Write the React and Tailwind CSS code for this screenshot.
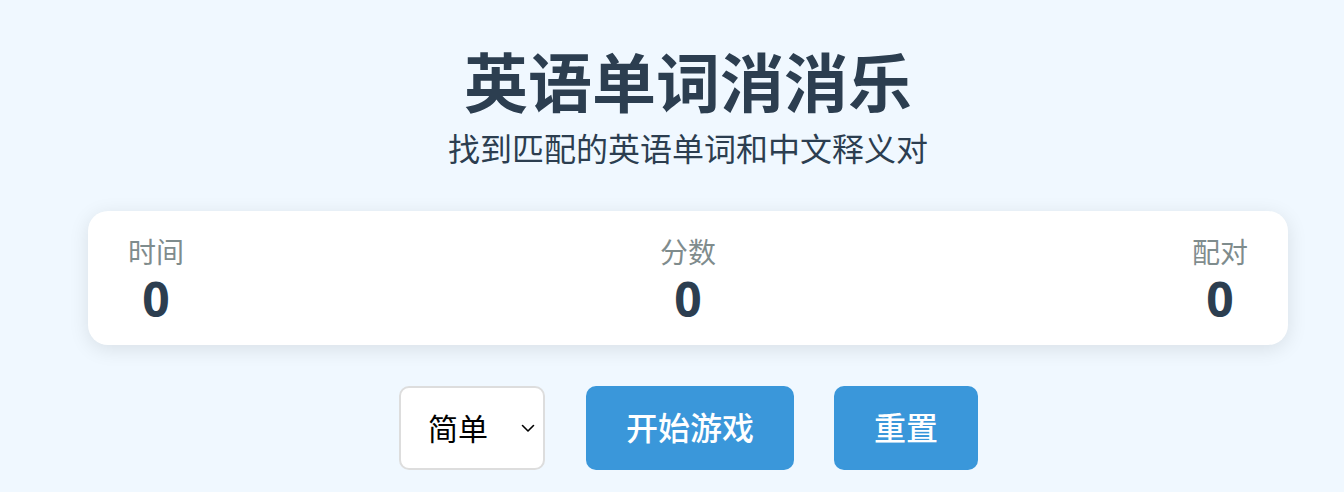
import React, { useState } from 'react';

const FONT = '"Noto Sans", "Noto Sans CJK SC", sans-serif';

function Stat({ label, value }) {
  return (
    <div className="flex flex-col items-center">
      <span className="text-[28px] leading-[42px] text-[#7f8c8d]">{label}</span>
      <span className="text-[48px] leading-[52px] font-bold text-[#2c3e50]">{value}</span>
    </div>
  );
}

export default function App() {
  const [level, setLevel] = useState('easy');

  return (
    <div className="min-h-screen bg-[#f0f8ff] pl-[32px]" style={{ fontFamily: FONT }}>
      <div className="max-w-[1200px] mx-auto pt-[44px]">
        {/* Header */}
        <div className="flex flex-col items-center">
          <h1 className="text-[64px] leading-[77px] font-bold text-[#2c3e50]">英语单词消消乐</h1>
          <p className="mt-[9px] text-[32px] leading-[38px] text-[#2c3e50]">找到匹配的英语单词和中文释义对</p>
        </div>

        {/* Stats */}
        <div className="mt-[43px] bg-white rounded-[20px] shadow-[0_4px_20px_rgba(0,0,0,0.1)] px-[40px] py-[20px] flex justify-between">
          <Stat label="时间" value="0" />
          <Stat label="分数" value="0" />
          <Stat label="配对" value="0" />
        </div>

        {/* Controls */}
        <div className="mt-[41px] flex justify-center items-center gap-[40px] pl-[1px]">
          <div className="relative mr-[1px]">
            <select
              value={level}
              onChange={(e) => setLevel(e.target.value)}
              className="appearance-none w-[146px] h-[84px] bg-white border-2 border-[#dddddd] rounded-[10px] pl-[27px] text-[30px] text-black outline-none"
              style={{ fontFamily: FONT }}
            >
              <option value="easy">简单</option>
              <option value="medium">中等</option>
              <option value="hard">困难</option>
            </select>
            <svg className="absolute right-[8px] top-1/2 -translate-y-1/2 pointer-events-none" width="18" height="18" viewBox="0 0 18 18" fill="none">
              <path d="M3.5 6.5 L9 12 L14.5 6.5" stroke="#000" strokeWidth="1.6" strokeLinecap="round" strokeLinejoin="round" />
            </svg>
          </div>
          <button className="h-[84px] px-[40px] rounded-[10px] bg-[#3a97da] text-white text-[32px] font-medium">开始游戏</button>
          <button className="h-[84px] px-[40px] rounded-[10px] bg-[#3a97da] text-white text-[32px] font-medium">重置</button>
        </div>
      </div>
    </div>
  );
}
